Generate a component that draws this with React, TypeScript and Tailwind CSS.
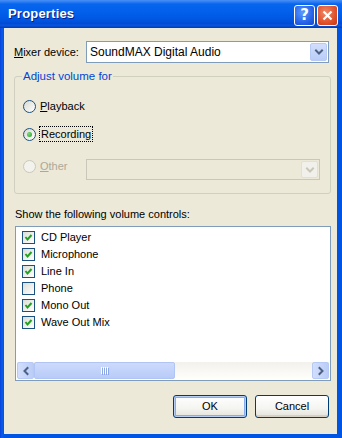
import React from "react";

const font = "font-['Liberation_Sans',Tahoma,Arial,sans-serif]";

function Chevron({ dir = "down", color = "#4D6185" }: { dir?: "down" | "left" | "right"; color?: string }) {
  const d =
    dir === "down" ? "M2 3.5 L5 6.5 L8 3.5" : dir === "left" ? "M6.5 2 L3.5 5 L6.5 8" : "M3.5 2 L6.5 5 L3.5 8";
  return (
    <svg width="10" height="10" viewBox="0 0 10 10">
      <path d={d} fill="none" stroke={color} strokeWidth="2" strokeLinecap="square" />
    </svg>
  );
}

function ComboButton({ disabled = false }: { disabled?: boolean }) {
  return (
    <div
      className={
        disabled
          ? "w-[17px] m-[1px] rounded-[2px] border border-[#E2E0D5] bg-[#F1F0EA] flex items-center justify-center"
          : "w-[17px] m-[1px] rounded-[2px] border border-[#B7CAF5] bg-[linear-gradient(to_bottom,#D2DEFC,#B9CDF7)] flex items-center justify-center"
      }
    >
      <Chevron color={disabled ? "#C9C7BA" : "#4D6185"} />
    </div>
  );
}

function Radio({ checked = false, disabled = false }: { checked?: boolean; disabled?: boolean }) {
  return (
    <div
      className={
        disabled
          ? "w-[13px] h-[13px] rounded-full border border-[#CAC8BB] bg-[#F3F2EC]"
          : "w-[13px] h-[13px] rounded-full border border-[#1C5180] bg-[linear-gradient(135deg,#D9D9D2,#FFFFFF)] flex items-center justify-center"
      }
    >
      {checked && (
        <div className="w-[5px] h-[5px] rounded-full bg-[radial-gradient(circle_at_35%_35%,#7BDB7B,#21A121)]" />
      )}
    </div>
  );
}

function Check({ checked }: { checked: boolean }) {
  return (
    <div className="w-[13px] h-[13px] border border-[#1C5180] bg-[linear-gradient(135deg,#DCDCD7,#FFFFFF)] flex items-center justify-center">
      {checked && (
        <svg width="11" height="11" viewBox="0 0 11 11">
          <path d="M2.5 5 L4.5 7.5 L8.5 3" fill="none" stroke="#21A121" strokeWidth="2" />
        </svg>
      )}
    </div>
  );
}

function XPButton({ label, isDefault = false }: { label: string; isDefault?: boolean }) {
  return (
    <button
      className={
        "w-[74px] h-[23px] rounded-[3px] border border-[#003C74] bg-[linear-gradient(to_bottom,#FFFFFF,#F4F4F0_60%,#E3E2DA)] text-[11px] text-black " +
        (isDefault
          ? "shadow-[inset_0_0_0_1px_#B6CDF6,inset_0_0_0_2px_#8AAAEF]"
          : "shadow-[inset_0_-2px_0_#D6D0C5]")
      }
    >
      {label}
    </button>
  );
}

export default function App() {
  const controls = [
    { name: "CD Player", on: true },
    { name: "Microphone", on: true },
    { name: "Line In", on: true },
    { name: "Phone", on: false },
    { name: "Mono Out", on: true },
    { name: "Wave Out Mix", on: true },
  ];

  return (
    <div className={`w-[342px] h-[438px] flex flex-col bg-[linear-gradient(to_right,#0842D6,#0A5AEE_2px,#0054E3_4px)] ${font}`}>
      {/* title bar */}
      <div className="h-[28px] flex items-center justify-between pl-[8px] pr-[4px] bg-[linear-gradient(to_bottom,#4A90F5_0px,#2C7CF2_2px,#0865EE_4px,#005EE9_14px,#0055E0_20px,#004AD2_24px,#0B58E2_25px,#003AB8_28px)]">
        <span className="text-white font-bold text-[13px] tracking-[0.2px] [text-shadow:1px_1px_0_#0A1E8C]">
          Properties
        </span>
        <div className="flex gap-[2px] mt-[2px]">
          <div className="w-[21px] h-[21px] rounded-[3px] border border-white bg-[radial-gradient(circle_at_40%_35%,#5A9BFF,#2663E8_60%,#1847C8)] flex items-center justify-center">
            <span className="text-white font-bold text-[15px] leading-none font-['DejaVu_Sans',sans-serif]">?</span>
          </div>
          <div className="w-[21px] h-[21px] rounded-[3px] border border-white bg-[radial-gradient(circle_at_40%_35%,#F08A6A,#E0512B_60%,#C2391A)] flex items-center justify-center">
            <svg width="11" height="11" viewBox="0 0 11 11">
              <path d="M1.5 1.5 L9.5 9.5 M9.5 1.5 L1.5 9.5" stroke="white" strokeWidth="2.2" />
            </svg>
          </div>
        </div>
      </div>

      {/* body */}
      <div className="flex-1 ml-[4px] mr-[5px] mb-[4px] bg-[#ECE9D8] pl-[10px] pr-[6px] pt-[13px] flex flex-col text-[11px] text-black">
        <div className="flex items-center mr-[2px]">
          <span className="w-[72px]">
            <span className="underline">M</span>ixer device:
          </span>
          <div className="flex-1 h-[22px] border border-[#7F9DB9] bg-white flex">
            <span className="flex-1 pl-[3px] self-center text-[12px]">SoundMAX Digital Audio</span>
            <ComboButton />
          </div>
        </div>

        <fieldset className="mt-[5px] border border-[#D0D0BF] rounded-[3px] pl-[8px] pr-[10px] pb-[13px]">
          <legend className="text-[#0046D5] px-[1px] ml-[-1px] leading-[16px] text-[11.5px]">Adjust volume for</legend>
          <div className="mt-[14px] h-[16px] flex items-center gap-[4px]">
            <Radio />
            <span>
              <span className="underline">P</span>layback
            </span>
          </div>
          <div className="mt-[12px] h-[16px] flex items-center gap-[3px]">
            <Radio checked />
            <span className="border border-dotted border-black px-[1px] leading-[14px]">Recording</span>
          </div>
          <div className="mt-[16px] flex items-start">
            <div className="h-[16px] w-[63px] flex items-center gap-[4px] text-[#ACA899]">
              <Radio disabled />
              <span>
                <span className="underline">O</span>ther
              </span>
            </div>
            <div className="flex-1 mt-[1px] h-[21px] border border-[#C9C7BA] bg-[#ECE9D8] flex justify-end">
              <ComboButton disabled />
            </div>
          </div>
        </fieldset>

        <div className="mt-[13px] pl-[1px] leading-[14px]">Show the following volume controls:</div>

        <div className="mt-[5px] ml-[1px] h-[155px] border border-[#7F9DB9] bg-white flex flex-col">
          <div className="flex-1 pt-[2px] pl-[6px]">
            {controls.map((c) => (
              <div key={c.name} className="h-[17px] flex items-center gap-[6px]">
                <Check checked={c.on} />
                <span>{c.name}</span>
              </div>
            ))}
          </div>
          <div className="h-[17px] mx-[1px] mb-[1px] flex bg-[linear-gradient(to_bottom,#F3F1EC,#FEFEFB)]">
            <div className="w-[17px] rounded-[2px] border border-[#B7CAF5] bg-[linear-gradient(to_right,#D2DEFC,#BACDF7)] flex items-center justify-center">
              <Chevron dir="left" />
            </div>
            <div className="w-[141px] rounded-[2px] border border-[#B1C5F5] bg-[linear-gradient(to_bottom,#CDDAFC,#B8CBF8)] flex items-center justify-center gap-[1px]">
              {[0, 1, 2, 3].map((i) => (
                <div key={i} className="w-[1px] h-[7px] bg-white shadow-[1px_1px_0_#8DA6E4]" />
              ))}
            </div>
            <div className="flex-1" />
            <div className="w-[17px] rounded-[2px] border border-[#B7CAF5] bg-[linear-gradient(to_right,#D2DEFC,#BACDF7)] flex items-center justify-center">
              <Chevron dir="right" />
            </div>
          </div>
        </div>

        <div className="mt-[14px] flex justify-end gap-[8px] pr-[2px]">
          <XPButton label="OK" isDefault />
          <XPButton label="Cancel" />
        </div>
      </div>
    </div>
  );
}
